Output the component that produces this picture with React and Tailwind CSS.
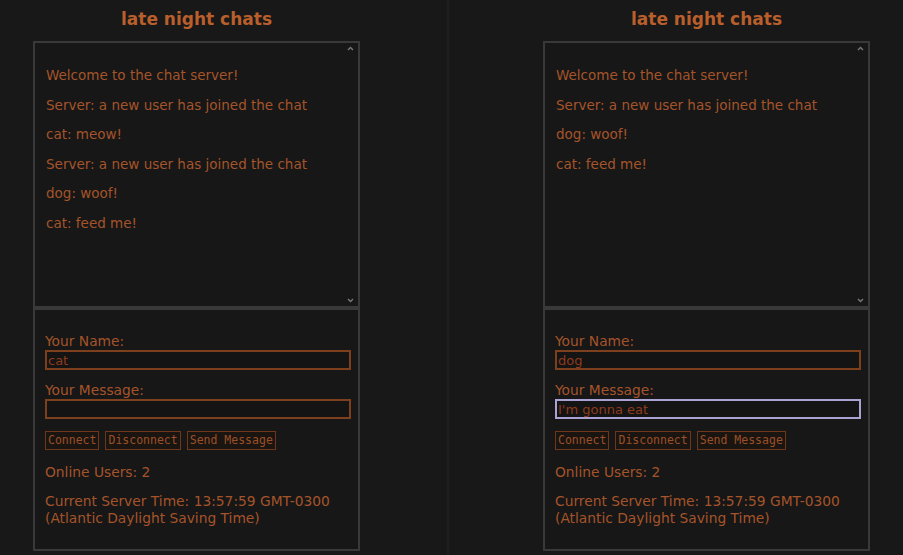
import React from "react";

const sans = { fontFamily: '"DejaVu Sans", Verdana, sans-serif' };

function ChatPane({ messages, name, draft, focused, className }) {
  return (
    <div className={`w-[327px] ${className}`} style={sans}>
      <h1 className="pt-[8px] mb-[11px] text-center text-[17px] leading-[22px] font-bold text-[#b95f2c]">
        late night chats
      </h1>

      {/* messages */}
      <div className="relative h-[267px] border-2 border-[#393939] bg-[#171717] px-[11px] py-[12px]">
        {messages.map((m, i) => (
          <p key={i} className="my-[12px] text-[13.5px] leading-[17.5px] text-[#a5542a]">
            {m}
          </p>
        ))}
        <svg className="absolute right-[4px] top-[3px]" width="7" height="5" viewBox="0 0 7 5">
          <path d="M1 4 L3.5 1.5 L6 4" fill="none" stroke="#7a7a7a" strokeWidth="1.3" />
        </svg>
        <svg className="absolute right-[4px] bottom-[3px]" width="7" height="5" viewBox="0 0 7 5">
          <path d="M1 1 L3.5 3.5 L6 1" fill="none" stroke="#7a7a7a" strokeWidth="1.3" />
        </svg>
      </div>

      {/* form */}
      <div className="h-[243px] border-2 border-[#393939] bg-[#171717] px-[10px] pt-[23px]">
        <label className="block text-[13.8px] leading-[17px] text-[#a5542a]">Your Name:</label>
        <input
          readOnly
          value={name}
          className="block w-[306px] h-[20px] border-2 border-[#7e3f1c] bg-[#141414] px-[1px] text-[13px] leading-[16px] text-[#8e3b1c] outline-none"
          style={sans}
        />
        <label className="mt-[12px] block text-[13.8px] leading-[17px] text-[#a5542a]">Your Message:</label>
        <input
          readOnly
          value={draft}
          className={`block w-[306px] h-[20px] border-2 bg-[#141414] px-[1px] text-[13px] leading-[16px] text-[#8e3b1c] outline-none ${
            focused ? "border-[#a9a2d2] outline-1 outline-[#6f6a8c]" : "border-[#7e3f1c]"
          }`}
          style={sans}
        />
        <div
          className="mt-[12px] flex gap-[6px]"
          style={{ fontFamily: '"DejaVu Sans Mono", monospace' }}
        >
          {["Connect", "Disconnect", "Send Message"].map((b) => (
            <button
              key={b}
              className="h-[19px] border border-[#6f3619] bg-[#1a1511] px-[2px] text-[11.5px] leading-[15px] text-[#9c5027]"
            >
              {b}
            </button>
          ))}
        </div>
        <p className="mt-[14px] text-[13.8px] leading-[17px] text-[#a5542a]">Online Users: 2</p>
        <p className="mt-[12px] text-[13.8px] leading-[17px] text-[#a5542a]">
          Current Server Time: 13:57:59 GMT-0300
          <br />
          (Atlantic Daylight Saving Time)
        </p>
      </div>
    </div>
  );
}

export default function App() {
  return (
    <div className="flex h-[555px] w-[903px] overflow-hidden bg-[#181818]">
      <div className="w-[447px] shrink-0 pl-[33px]">
        <ChatPane
          messages={[
            "Welcome to the chat server!",
            "Server: a new user has joined the chat",
            "cat: meow!",
            "Server: a new user has joined the chat",
            "dog: woof!",
            "cat: feed me!",
          ]}
          name="cat"
          draft=""
        />
      </div>
      <div className="w-[2px] shrink-0 bg-[#1e1e1e]" />
      <div className="flex-1 pl-[94px]">
        <ChatPane
          messages={[
            "Welcome to the chat server!",
            "Server: a new user has joined the chat",
            "dog: woof!",
            "cat: feed me!",
          ]}
          name="dog"
          draft="I'm gonna eat"
          focused
        />
      </div>
    </div>
  );
}
